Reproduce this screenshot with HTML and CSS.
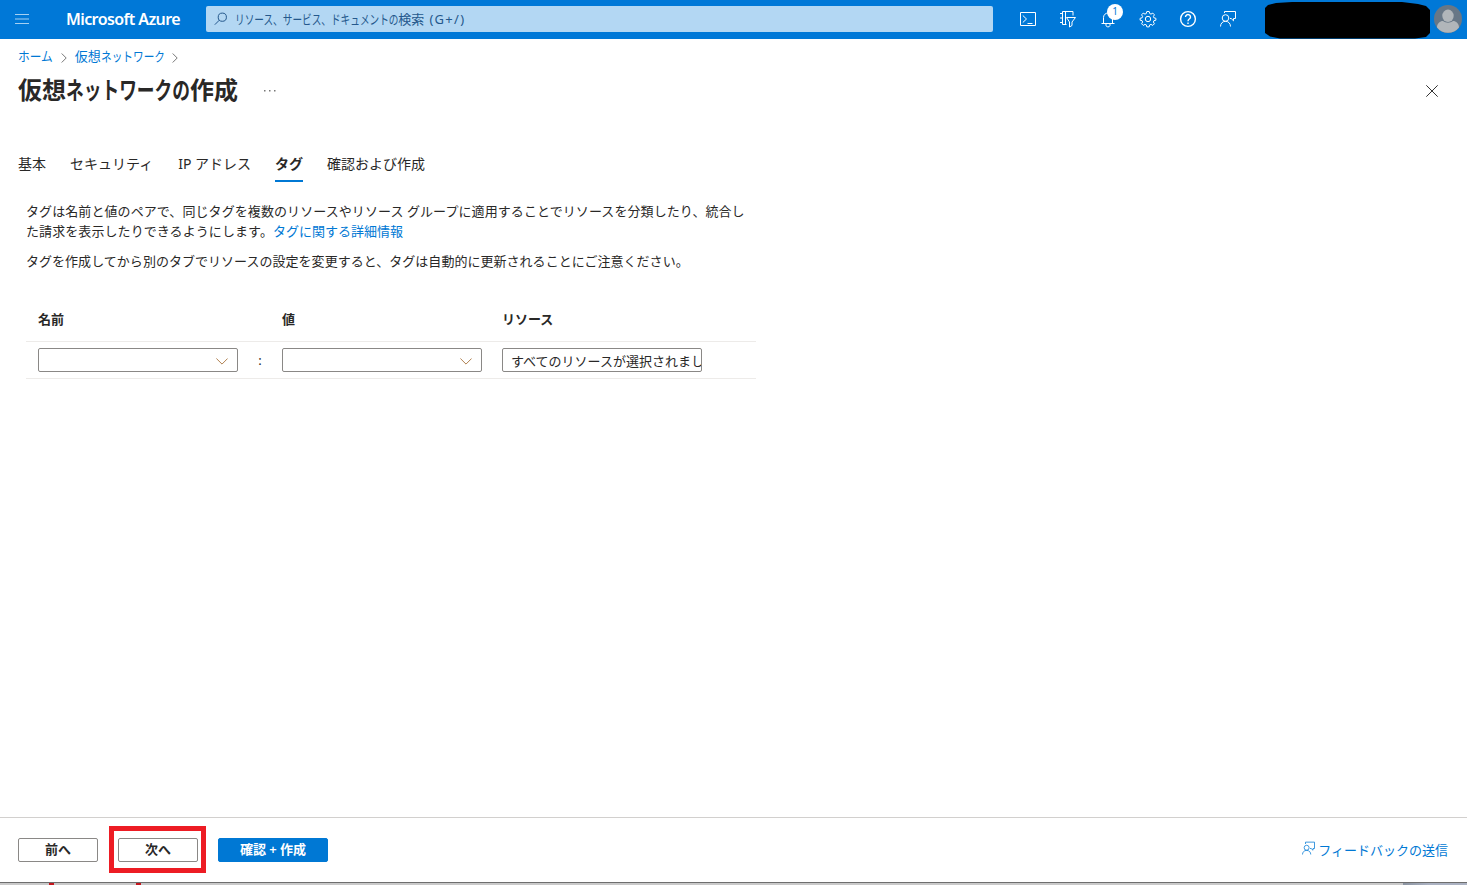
FILE: index.html
```html
<!DOCTYPE html>
<html lang="ja">
<head>
<meta charset="utf-8">
<title>仮想ネットワークの作成 - Microsoft Azure</title>
<link rel="stylesheet" href="styles.css">
</head>
<body>
<header class="topbar">
  <svg class="menu" width="14" height="10" viewBox="0 0 14 10"><path d="M0 .5h14M0 5h14M0 9.5h14"/></svg>
  <span class="brand">Microsoft Azure</span>
  <div class="search">
    <svg width="14" height="14" viewBox="0 0 14 14"><circle cx="8.3" cy="5.2" r="4.1"/><path d="M5.3 8.2L.8 12.7"/></svg>
    <span class="kana kana-search">リソース、サービス、ドキュメントの</span><span>検索</span><span class="shortcut">(G+/)</span>
  </div>
  <nav class="tools">
    <svg width="20" height="20" viewBox="0 0 20 20"><path d="M2.5 3.5h15v13h-15zM4.8 6.5L8.5 10l-3.7 3.5M9.5 14.5h5"/></svg>
    <svg width="20" height="20" viewBox="0 0 20 20"><path d="M8.500 15.500H4.500V2.500h10.500v4M7.500 2.500v13M2 4.500h3M2 9h3M2 13.500h3M8.500 8.500h9l-3.500 4.500v3.500l-2.500 1.500v-5z"/></svg>
    <span class="bell">
      <svg width="20" height="20" viewBox="0 0 20 20"><path d="M3.500 14.500h13M5.500 14.500V8.500a4.500 4.500 0 0 1 9 0v6M8 15a2 2 0 0 0 4 1.500V15"/></svg>
      <span class="badge">1</span>
    </span>
    <svg width="20" height="20" viewBox="0 0 20 20"><circle cx="10" cy="10" r="2.700"/><path d="M8.800 2.500h2.400l.5 2 1.300.6 1.800-1 1.600 1.700-1 1.800.5 1.200 2 .5v1.900l-2 .5-.5 1.300 1 1.800-1.600 1.600-1.800-1-1.300.5-.5 2H8.800l-.5-2-1.300-.5-1.800 1-1.600-1.600 1-1.800-.5-1.300-2-.5V9.300l2-.5.5-1.200-1-1.800 1.600-1.700 1.800 1 1.300-.6z"/></svg>
    <svg width="20" height="20" viewBox="0 0 20 20"><circle class="bold" cx="10" cy="10" r="7.400"/><path class="bold" d="M7.500 8a2.500 2.400 0 1 1 3.800 2c-.9.600-1.300 1-1.300 2.200M10 13.400v1.500"/></svg>
    <svg width="20" height="20" viewBox="0 0 20 20"><circle cx="7.500" cy="9" r="3.300"/><path d="M2.500 17.500c0-3 2-5.200 5-5.200s5 2.200 5 5.200M6.500 4V2.500h11v7h-2v2.300l-2.300-2.300H12"/></svg>
  </nav>
  <svg class="mask" width="165" height="37" viewBox="0 0 165 37"><path d="M0 6l3-3 8-2 16-1h110l16 2 8 2 4 4v23l-4 4-11 1.500H15L5 34.500 0 31z"/></svg>
  <svg class="avatar" width="28" height="28" viewBox="0 0 28 28"><circle cx="14" cy="14" r="14" fill="#687786"/><path fill="#b1b6ba" d="M3 22.500c0-4 3-6.500 6-6.500 3 2.200 7 2.200 10 0 3 0 6 2.500 6 6.500a14 14 0 0 1-22 0z"/><ellipse cx="14" cy="10.800" rx="5.700" ry="6.200" fill="#b1b6ba"/></svg>
</header>

<main class="blade">
  <nav class="crumbs">
    <a><span class="kana kana-home">ホーム</span></a>
    <svg width="6" height="10" viewBox="0 0 6 10"><path d="M.7.5L5.200 5 .7 9.500"/></svg>
    <a>仮想<span class="kana kana-network">ネットワーク</span></a>
    <svg width="6" height="10" viewBox="0 0 6 10"><path d="M.7.500L5.200 5 .7 9.500"/></svg>
  </nav>
  <div class="heading">
    <h1>仮想<span class="kana kana-title">ネットワークの</span>作成</h1>
    <svg class="more" width="12" height="2" viewBox="0 0 12 2"><path d="M0 0h1.500v1.500H0zM5 0h1.500v1.500H5zM10 0h1.500v1.500H10z"/></svg>
    <svg class="close" width="12" height="12" viewBox="0 0 12 12"><path d="M.3.300l11.400 11.400M11.700.3L.3 11.700"/></svg>
  </div>
  <nav class="tabs">
    <span>基本</span><span>セキュリティ</span><span class="ip">IP アドレス</span><span class="active">タグ</span><span>確認および作成</span>
  </nav>
  <section class="intro">
    <p class="lead">タグは名前と値のペアで、同じタグを複数のリソースやリソース グループに適用することでリソースを分類したり、統合し<br>た請求を表示したりできるようにします。<a>タグに関する詳細情報</a></p>
    <p>タグを作成してから別のタブでリソースの設定を変更すると、タグは自動的に更新されることにご注意ください。</p>
  </section>
  <section class="tags">
    <div class="row labels"><b>名前</b><span></span><b>値</b><b class="resource">リソース</b></div>
    <div class="row fields">
      <div class="box select"><svg width="12" height="7" viewBox="0 0 12 7"><path d="M.4.500L6 6.100 11.600.5"/></svg></div>
      <span class="colon">:</span>
      <div class="box select"><svg width="12" height="7" viewBox="0 0 12 7"><path d="M.4.500L6 6.100 11.600.5"/></svg></div>
      <div class="box resource">すべてのリソースが選択されまし</div>
    </div>
  </section>
</main>

<footer class="actions">
  <button class="btn">前へ</button>
  <div class="highlight"><button class="btn">次へ</button></div>
  <button class="btn primary">確認 + 作成</button>
  <a class="feedback"><svg width="15" height="15" viewBox="0 0 20 20"><circle cx="7.500" cy="9" r="3.300"/><path d="M2 18c0-3 2-5.500 5.500-5.500S13 15 13 18M6 4V1.500h12v8.500h-2v2.300L13.500 10H12"/></svg>フィードバックの送信</a>
</footer>
<div class="edge"><i class="mark"></i><i class="mark"></i><i class="corner"></i></div>
</body>
</html>
```
FILE: styles.css
```css
* { box-sizing: border-box; }
body {
  margin: 0;
  height: 885px;
  overflow: hidden;
  display: flex;
  flex-direction: column;
  background: #fff;
  color: #292827;
  font: 13px/20px "Noto Sans", "Noto Sans CJK JP", sans-serif;
  white-space: nowrap;
}
svg { display: block; flex: none; fill: none; stroke-width: 1; }
a { color: #0078d4; }

/* Condensed kana; the negative margin removes the width freed by scaling */
.kana { display: inline-block; transform-origin: left; }
.kana-search { transform: scaleX(.742); margin-right: -57px; }
.kana-home { transform: scaleX(.9); margin-right: -4px; }
.kana-network { transform: scaleX(.82); margin-right: -14px; }
.kana-title { transform: scaleX(.738); margin-right: -44px; }

.topbar {
  height: 39px;
  flex: none;
  display: flex;
  align-items: center;
  padding-bottom: 1px;
  background: #0078d7;
  color: #fff;
}
.menu { margin: 0 0 0 15px; stroke: #a5d0f2; }
.brand {
  width: 140px;
  margin-left: 37px;
  font: 600 16px/20px "Noto Sans", sans-serif;
  letter-spacing: -.6px;
}
.search {
  width: 787px;
  height: 26px;
  display: flex;
  align-items: center;
  padding-left: 8px;
  border-radius: 2px;
  background: #b3d7f3;
  color: #24588c;
}
.search svg { margin-right: 7px; stroke: #24588c; }
.shortcut { margin-left: 5px; letter-spacing: 1.3px; }
.tools { display: flex; gap: 20px; margin-left: 25px; }
.tools svg { stroke: #fff; }
.tools .bold { stroke-width: 1.4; }
.bell { position: relative; }
.badge {
  position: absolute;
  left: 9px;
  top: -5px;
  width: 16px;
  height: 16px;
  border-radius: 50%;
  background: #fff;
  color: #0078d4;
  font-size: 10px;
  line-height: 15px;
  text-align: center;
}
.mask { margin: 2px 0 0 27px; fill: #000; }
.avatar { margin-left: 4px; }

.blade { flex: 1; }
.crumbs { display: flex; align-items: center; height: 20px; margin: 7px 0 0 18px; }
.crumbs svg { margin: 3px 8px 0; stroke: #777; }
.crumbs svg:last-child { margin-left: 7px; }
.heading { display: flex; align-items: center; height: 36px; margin: 6px 29px 0 18px; }
h1 { margin: 0; font-size: 24px; line-height: 36px; font-weight: 700; width: 220px; }
.more { margin: 2px 0 0 26px; fill: #777; }
.close { margin-left: auto; margin-top: 2px; stroke: #333; }
.tabs { display: flex; gap: 24px; margin: 46px 0 0 18px; font-size: 14px; line-height: 20px; }
.tabs span { height: 28px; }
.tabs .ip { margin-left: 1px; }
.tabs .active { font-weight: 700; border-bottom: 2px solid #0078d4; }
.intro { margin: 19px 0 0 26px; }
.intro p { margin: 0 0 10px; letter-spacing: .03px; }
.intro .lead { letter-spacing: .08px; }
.intro .lead a { letter-spacing: 0; }
.tags { width: 730px; margin: 38px 0 0 26px; }
.row { display: grid; grid-template-columns: 200px 44px 200px 200px; padding-left: 12px; border-bottom: 1px solid #edebe9; }
.resource { margin-left: 20px; }
.labels { height: 33px; }
.fields { height: 37px; padding-top: 6px; }
.box { width: 200px; height: 24px; border: 1px solid #8a8886; border-radius: 2px; }
.select { display: flex; align-items: center; justify-content: flex-end; padding-right: 9px; }
.select svg { margin-top: 2px; stroke: #b08050; }
.box.resource { padding: 2px 0 0 8px; overflow: hidden; line-height: 20px; }
.colon { text-align: center; line-height: 24px; }

.actions {
  height: 65px;
  flex: none;
  display: flex;
  align-items: center;
  padding: 0 19px 0 18px;
  border-top: 1px solid #d2d0ce;
}
.btn {
  display: block;
  width: 80px;
  height: 24px;
  padding: 0 0 1px;
  border: 1px solid #8a8886;
  border-radius: 2px;
  background: #fff;
  color: #292827;
  font: 600 13px/21px "Noto Sans", "Noto Sans CJK JP", sans-serif;
}
.highlight { width: 97px; height: 47px; margin: -1px 12px 0 11px; border: 5px solid #ed1c24; padding: 7px 4px 0; }
.primary { width: 110px; border-color: #0078d4; background: #0078d4; color: #fff; }
.feedback { display: flex; gap: 2px; margin-left: auto; }
.feedback svg { margin-top: 1px; stroke: #0078d4; }

.edge { height: 3px; flex: none; display: flex; border-top: 1px solid #6e6e6e; background: #c9c9c9; }
.mark { width: 5px; margin-left: 49px; background: #c4161d; }
.mark + .mark { margin-left: 82px; }
.corner { width: 64px; margin-left: auto; background: linear-gradient(90deg, #8a93a0, #abb2c2 40%); }
```
